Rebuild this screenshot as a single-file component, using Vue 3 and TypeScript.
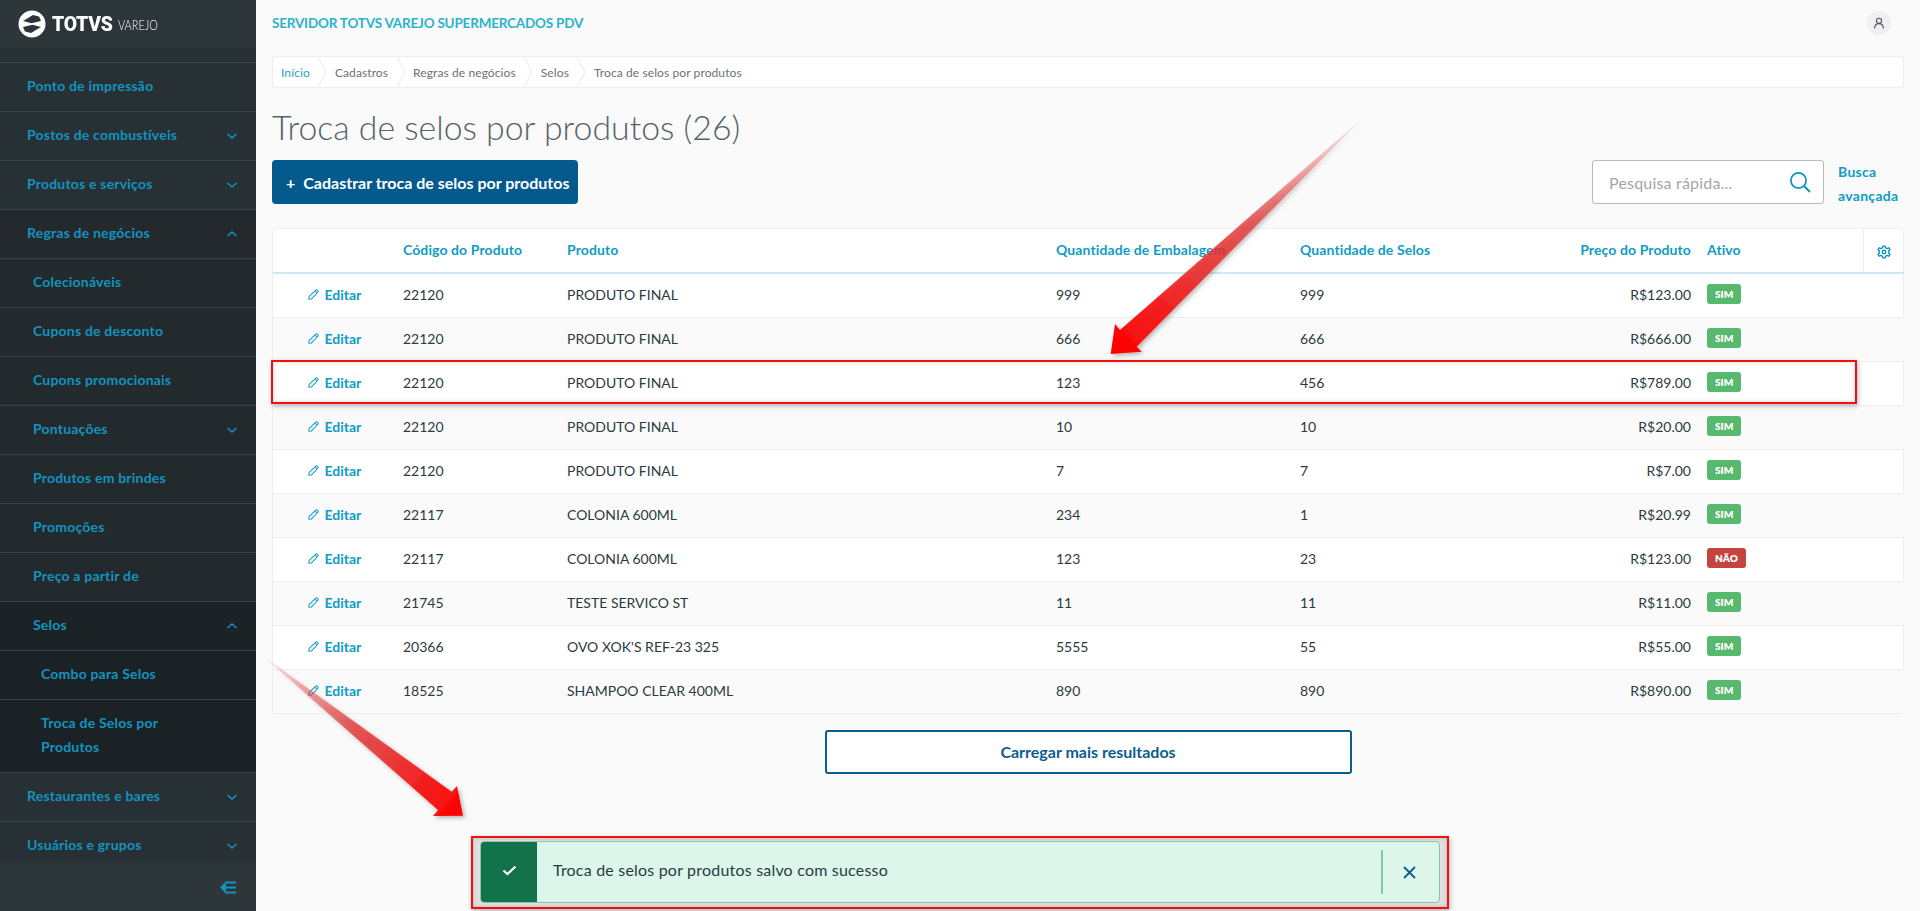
<template>
  <div class="page">
    <aside class="sidebar">
      <div class="brand">
        <svg class="brand-mark" width="28" height="28" viewBox="0 0 28 28">
          <circle cx="14" cy="14" r="13.5" fill="#fff" />
          <path d="M5 11 L15 5 L21 6.5 L23 11 L13.5 13.2 Z" fill="#2d3639" />
          <path d="M23 17 L13 23 L7 21.5 L5 17 L14.5 14.8 Z" fill="#2d3639" />
        </svg>
        <span class="brand-name">TOTVS</span>
        <span class="brand-sub">VAREJO</span>
      </div>
      <nav class="menu">
        <div class="menu-top"></div>
        <a
          v-for="item in menu"
          :key="item.label"
          class="menu-item"
          :class="[`level-${item.level}`, { open: item.chevron === 'up' }]"
        >
          <span class="menu-label">{{ item.label }}</span>
          <svg v-if="item.chevron" class="chevron" width="12" height="8" viewBox="0 0 12 8">
            <path :d="item.chevron === 'up' ? 'M1.5 6 L6 2 L10.5 6' : 'M1.5 2 L6 6 L10.5 2'" fill="none" stroke="#1393bf" stroke-width="1.6" />
          </svg>
        </a>
      </nav>
      <div class="sidebar-foot">
        <svg width="17" height="13" viewBox="0 0 17 13">
          <path d="M7 .5 L1 6.5 L7 12.5 Z" fill="#1393bf" />
          <path d="M3 6.5 H17 M6 1.5 H17 M6 11.5 H17" stroke="#1393bf" stroke-width="2" />
        </svg>
      </div>
    </aside>

    <main class="main">
      <header class="topbar">
        <span class="server">SERVIDOR TOTVS VAREJO SUPERMERCADOS PDV</span>
        <span class="avatar">
          <svg width="12" height="12" viewBox="0 0 12 12">
            <circle cx="6" cy="3.8" r="2.6" fill="none" stroke="#4c5a60" stroke-width="1.1" />
            <path d="M1.5 11.5 C1.8 8.3 3.6 6.6 6 6.6 C8.4 6.6 10.2 8.3 10.5 11.5" fill="none" stroke="#4c5a60" stroke-width="1.1" />
          </svg>
        </span>
      </header>

      <div class="breadcrumb">
        <template v-for="(crumb, i) in crumbs" :key="crumb">
          <svg v-if="i > 0" class="crumb-sep" width="8" height="30" viewBox="0 0 8 30">
            <path d="M0 0 L8 15 L0 30" fill="none" stroke="#e6e8e9" />
          </svg>
          <span class="crumb" :class="{ first: i === 0 }">{{ crumb }}</span>
        </template>
      </div>

      <h1 class="title">Troca de selos por produtos (26)</h1>

      <div class="toolbar">
        <button class="primary"><span class="plus">+</span>Cadastrar troca de selos por produtos</button>
        <div class="search-area">
          <div class="search">
            <span class="placeholder">Pesquisa rápida...</span>
            <svg width="22" height="22" viewBox="0 0 22 22">
              <circle cx="9.5" cy="9.5" r="7.6" fill="none" stroke="#0e94ba" stroke-width="1.7" />
              <path d="M15 15 L21 21" stroke="#0e94ba" stroke-width="1.9" />
            </svg>
          </div>
          <a class="advanced">Busca<br />avançada</a>
        </div>
      </div>

      <div class="table-card">
        <table>
          <colgroup>
            <col style="width: 118px" />
            <col style="width: 164px" />
            <col style="width: 489px" />
            <col style="width: 244px" />
            <col style="width: 213px" />
            <col style="width: 198px" />
            <col style="width: 164px" />
            <col style="width: 41px" />
          </colgroup>
          <thead>
            <tr>
              <th></th>
              <th>Código do Produto</th>
              <th>Produto</th>
              <th>Quantidade de Embalagem</th>
              <th>Quantidade de Selos</th>
              <th class="price">Preço do Produto</th>
              <th class="ativo">Ativo</th>
              <th class="gear">
                <svg width="14" height="14" viewBox="0 0 24 24" fill="none" stroke="#0e94ba" stroke-width="2.4">
                  <circle cx="12" cy="12" r="3" />
                  <path d="M10 2 H14 L14.8 5 L17.6 6.2 L20.3 4.7 L22.2 8 L20 10.2 V13.8 L22.2 16 L20.3 19.3 L17.6 17.8 L14.8 19 L14 22 H10 L9.2 19 L6.4 17.8 L3.7 19.3 L1.8 16 L4 13.8 V10.2 L1.8 8 L3.7 4.7 L6.4 6.2 L9.2 5 Z" stroke-linejoin="round" />
                </svg>
              </th>
            </tr>
          </thead>
          <tbody>
            <tr v-for="(row, i) in rows" :key="i">
              <td class="edit">
                <svg width="11" height="11" viewBox="0 0 12 12">
                  <path d="M1.2 8.4 L8.2 1.4 C8.8 .8 9.7 .8 10.3 1.4 L10.6 1.7 C11.2 2.3 11.2 3.2 10.6 3.8 L3.6 10.8 L.8 11.2 Z M7.4 2.2 L9.8 4.6" fill="none" stroke="#0f9cc4" stroke-width="1.1" />
                </svg>
                Editar
              </td>
              <td>{{ row.code }}</td>
              <td>{{ row.product }}</td>
              <td>{{ row.pack }}</td>
              <td>{{ row.stamps }}</td>
              <td class="price">{{ row.price }}</td>
              <td class="ativo"><span class="badge" :class="{ no: !row.active }">{{ row.active ? 'SIM' : 'NÃO' }}</span></td>
              <td></td>
            </tr>
          </tbody>
        </table>
      </div>

      <div class="more-row">
        <button class="more">Carregar mais resultados</button>
      </div>
    </main>

    <!-- annotations drawn over the screenshot -->
    <div class="mark mark-row"></div>
    <div class="mark mark-toast"></div>
    <svg class="arrows" width="1920" height="911" viewBox="0 0 1920 911">
      <defs>
        <linearGradient id="arrowA" gradientUnits="userSpaceOnUse" x1="1362" y1="118" x2="1111" y2="354">
          <stop offset="0" stop-color="#e52b2b" stop-opacity="0.05" />
          <stop offset="0.45" stop-color="#e03030" stop-opacity="0.75" />
          <stop offset="1" stop-color="#ff0000" />
        </linearGradient>
        <linearGradient id="arrowB" gradientUnits="userSpaceOnUse" x1="262" y1="655" x2="463" y2="816">
          <stop offset="0" stop-color="#e52b2b" stop-opacity="0.05" />
          <stop offset="0.45" stop-color="#e03030" stop-opacity="0.75" />
          <stop offset="1" stop-color="#ff0000" />
        </linearGradient>
        <filter id="soft" x="-10%" y="-10%" width="120%" height="120%">
          <feDropShadow dx="2" dy="2" stdDeviation="2" flood-color="#000" flood-opacity="0.3" />
        </filter>
      </defs>
      <polygon points="1362.7,118 1136.7,346.7 1141.7,351.7 1110.7,354 1115,324 1120,330" fill="url(#arrowA)" filter="url(#soft)" />
      <polygon points="261.7,655 451.7,791.7 457,786 463,815.7 433,816 438,810" fill="url(#arrowB)" filter="url(#soft)" />
    </svg>

    <div class="toast">
      <div class="toast-icon">
        <svg width="15" height="11" viewBox="0 0 15 11">
          <path d="M1.5 5.5 L5.5 9 L13.5 1.5" fill="none" stroke="#fff" stroke-width="2.2" />
        </svg>
      </div>
      <span class="toast-text">Troca de selos por produtos salvo com sucesso</span>
      <div class="toast-close">
        <svg width="13" height="13" viewBox="0 0 13 13">
          <path d="M1 1 L12 12 M12 1 L1 12" stroke="#0b5c8f" stroke-width="1.8" />
        </svg>
      </div>
    </div>
  </div>
</template>

<script setup lang="ts">
interface MenuItem {
  label: string;
  level: number;
  chevron?: 'up' | 'down';
}

interface Row {
  code: string;
  product: string;
  pack: string;
  stamps: string;
  price: string;
  active: boolean;
}

const menu: MenuItem[] = [
  { label: 'Ponto de impressão', level: 0 },
  { label: 'Postos de combustíveis', level: 0, chevron: 'down' },
  { label: 'Produtos e serviços', level: 0, chevron: 'down' },
  { label: 'Regras de negócios', level: 0, chevron: 'up' },
  { label: 'Colecionáveis', level: 1 },
  { label: 'Cupons de desconto', level: 1 },
  { label: 'Cupons promocionais', level: 1 },
  { label: 'Pontuações', level: 1, chevron: 'down' },
  { label: 'Produtos em brindes', level: 1 },
  { label: 'Promoções', level: 1 },
  { label: 'Preço a partir de', level: 1 },
  { label: 'Selos', level: 1, chevron: 'up' },
  { label: 'Combo para Selos', level: 2 },
  { label: 'Troca de Selos por Produtos', level: 2 },
  { label: 'Restaurantes e bares', level: 0, chevron: 'down' },
  { label: 'Usuários e grupos', level: 0, chevron: 'down' },
];

const crumbs = ['Início', 'Cadastros', 'Regras de negócios', 'Selos', 'Troca de selos por produtos'];

const rows: Row[] = [
  { code: '22120', product: 'PRODUTO FINAL', pack: '999', stamps: '999', price: 'R$123.00', active: true },
  { code: '22120', product: 'PRODUTO FINAL', pack: '666', stamps: '666', price: 'R$666.00', active: true },
  { code: '22120', product: 'PRODUTO FINAL', pack: '123', stamps: '456', price: 'R$789.00', active: true },
  { code: '22120', product: 'PRODUTO FINAL', pack: '10', stamps: '10', price: 'R$20.00', active: true },
  { code: '22120', product: 'PRODUTO FINAL', pack: '7', stamps: '7', price: 'R$7.00', active: true },
  { code: '22117', product: 'COLONIA 600ML', pack: '234', stamps: '1', price: 'R$20.99', active: true },
  { code: '22117', product: 'COLONIA 600ML', pack: '123', stamps: '23', price: 'R$123.00', active: false },
  { code: '21745', product: 'TESTE SERVICO ST', pack: '11', stamps: '11', price: 'R$11.00', active: true },
  { code: '20366', product: "OVO XOK'S REF-23 325", pack: '5555', stamps: '55', price: 'R$55.00', active: true },
  { code: '18525', product: 'SHAMPOO CLEAR 400ML', pack: '890', stamps: '890', price: 'R$890.00', active: true },
];
</script>

<style>
html,
body {
  margin: 0;
  background: #fafafa;
}
</style>

<style scoped>
.page {
  position: relative;
  display: flex;
  width: 1920px;
  height: 911px;
  overflow: hidden;
  background: #fafafa;
  font-family: Lato, "Open Sans", sans-serif;
  font-size: 14px;
  color: #2c3a40;
}

.sidebar {
  display: flex;
  flex-direction: column;
  flex: none;
  width: 256px;
  height: 911px;
  background: #273034;
}

.brand {
  display: flex;
  align-items: center;
  flex: none;
  height: 48px;
  padding-left: 18px;
  background: #2d3639;
  color: #fff;
}

.brand-mark {
  margin-right: 6px;
}

.brand-name {
  font-family: Roboto, sans-serif;
  font-size: 21px;
  font-weight: 900;
  letter-spacing: -0.2px;
  transform: scaleX(0.92);
  transform-origin: left center;
}

.brand-sub {
  font-size: 14px;
  font-weight: 300;
  transform: scaleX(0.78);
  transform-origin: left center;
}

.menu {
  flex: 1;
  overflow: hidden;
}

.menu-top {
  height: 14px;
  border-bottom: 1px solid #3a4447;
}

.menu-item {
  display: flex;
  align-items: center;
  justify-content: space-between;
  min-height: 48px;
  padding: 0 18px 0 27px;
  border-bottom: 1px solid #3a4447;
  color: #1393bf;
  font-weight: 700;
  letter-spacing: 0.2px;
  line-height: 24px;
}

.menu-label {
  margin-top: -2px;
}

.menu-item.level-1 {
  padding-left: 33px;
  background: #222a2d;
}

.menu-item.level-2 {
  padding: 11px 60px 13px 41px;
  min-height: 24px;
  background: #1b2225;
}

.menu-item.level-2 .menu-label {
  margin-top: 0;
}

.menu-item.level-0.open {
  background: #23292d;
}

.menu-item.level-1.open {
  background: #1c2326;
}

.sidebar-foot {
  display: flex;
  align-items: center;
  justify-content: flex-end;
  flex: none;
  height: 48px;
  padding-right: 20px;
  background: #2d3639;
}

.main {
  flex: 1;
  min-width: 0;
  padding: 0 16px;
}

.topbar {
  display: flex;
  align-items: center;
  justify-content: space-between;
  height: 46px;
  padding-right: 13px;
}

.server {
  color: #2bb3c9;
  font-size: 13.5px;
  font-weight: 700;
  letter-spacing: -0.2px;
}

.avatar {
  display: flex;
  align-items: center;
  justify-content: center;
  width: 24px;
  height: 24px;
  border-radius: 50%;
  background: #f0f0f0;
}

.breadcrumb {
  display: flex;
  align-items: center;
  height: 30px;
  margin-top: 10px;
  padding-left: 8px;
  border: 1px solid #eceeef;
  border-radius: 3px;
  background: #fff;
  font-size: 12px;
  letter-spacing: 0.1px;
  color: #6b7276;
}

.crumb-sep {
  flex: none;
  margin: 0 8.5px;
}

.crumb.first {
  color: #2a9fc4;
}

.title {
  margin: 17px 0 0;
  font-size: 33.8px;
  font-weight: 300;
  line-height: 44px;
  color: #55646a;
}

.toolbar {
  display: flex;
  align-items: flex-start;
  justify-content: space-between;
  margin-top: 11px;
}

.primary {
  display: flex;
  align-items: center;
  height: 44px;
  padding: 0 9px 0 14px;
  border: none;
  border-radius: 4px;
  background: #045a8d;
  color: #fff;
  font-family: inherit;
  font-size: 16px;
  font-weight: 700;
}

.plus {
  margin-right: 8px;
  font-size: 16px;
}

.search-area {
  display: flex;
  align-items: flex-start;
}

.search {
  display: flex;
  align-items: center;
  justify-content: space-between;
  box-sizing: border-box;
  width: 232px;
  height: 44px;
  padding: 0 12px 0 16px;
  border: 1px solid #b5bcc0;
  border-radius: 3px;
  background: #fff;
}

.placeholder {
  color: #a3a6a8;
  font-size: 16px;
  letter-spacing: 0.2px;
}

.advanced {
  width: 66px;
  margin-left: 14px;
  color: #0f9cc4;
  font-weight: 700;
  letter-spacing: 0.3px;
  line-height: 24px;
}

.table-card {
  box-sizing: border-box;
  margin-top: 20px;
  border: 1px solid #eceeef;
  border-radius: 3px;
  background: #fff;
}

table {
  width: 1631px;
  table-layout: fixed;
  border-collapse: collapse;
}

th {
  height: 41px;
  padding: 0 12px 2px;
  border-bottom: 2px solid #cde9f2;
  color: #0f9cc4;
  font-weight: 700;
  letter-spacing: 0.1px;
  text-align: left;
  white-space: nowrap;
}

td {
  height: 40px;
  padding: 0 12px 3px;
  border-bottom: 1px solid #eceeef;
  white-space: nowrap;
}

tbody tr:last-child td {
  border-bottom: none;
}

tbody tr:nth-child(even) {
  background: #fafafa;
}

.edit {
  padding-left: 35px;
  color: #0f9cc4;
  font-weight: 700;
}

.edit svg {
  margin-right: 2px;
}

.price {
  padding-right: 8px;
  text-align: right;
}

.ativo {
  padding-left: 8px;
}

.gear {
  padding: 0;
  border-left: 1px solid #eceeef;
  text-align: center;
}

.gear svg {
  vertical-align: middle;
}

.badge {
  display: inline-block;
  padding: 0 8px;
  border-radius: 3px;
  background: #57b96e;
  color: #fff;
  font-size: 10px;
  font-weight: 800;
  line-height: 20px;
  vertical-align: middle;
}

.badge.no {
  background: #c4453f;
}

.more-row {
  display: flex;
  justify-content: center;
  margin-top: 16px;
}

.more {
  box-sizing: border-box;
  width: 527px;
  height: 44px;
  padding-bottom: 3px;
  border: 2px solid #0b5c8f;
  border-radius: 3px;
  background: #fff;
  color: #0b5c8f;
  font-family: inherit;
  font-size: 16px;
  font-weight: 700;
}

.mark {
  position: absolute;
  box-sizing: border-box;
  border: 2px solid #f01010;
  box-shadow: 1px 2px 5px rgba(0, 0, 0, 0.28), inset 0 0 4px rgba(0, 0, 0, 0.18);
  pointer-events: none;
}

.mark-row {
  left: 271px;
  top: 360px;
  width: 1586px;
  height: 44px;
}

.mark-toast {
  left: 471px;
  top: 836px;
  width: 978px;
  height: 73px;
  background: rgba(0, 0, 0, 0.1);
}

.arrows {
  position: absolute;
  left: 0;
  top: 0;
  pointer-events: none;
}

.toast {
  position: absolute;
  left: 480px;
  top: 841px;
  display: flex;
  align-items: center;
  box-sizing: border-box;
  width: 960px;
  height: 62px;
  border: 1px solid #82c9a4;
  border-radius: 4px;
  background: #dcf6eb;
}

.toast-icon {
  display: flex;
  align-items: center;
  justify-content: center;
  align-self: stretch;
  flex: none;
  width: 56px;
  padding-bottom: 3px;
  background: #127249;
  border-radius: 3px 0 0 3px;
}

.toast-text {
  flex: 1;
  margin: 0 0 6px 16px;
  font-size: 16px;
  letter-spacing: 0.2px;
}

.toast-close {
  display: flex;
  align-items: center;
  flex: none;
  box-sizing: border-box;
  width: 58px;
  height: 44px;
  padding-left: 20px;
  border-left: 2px solid #82c9a4;
}
</style>
